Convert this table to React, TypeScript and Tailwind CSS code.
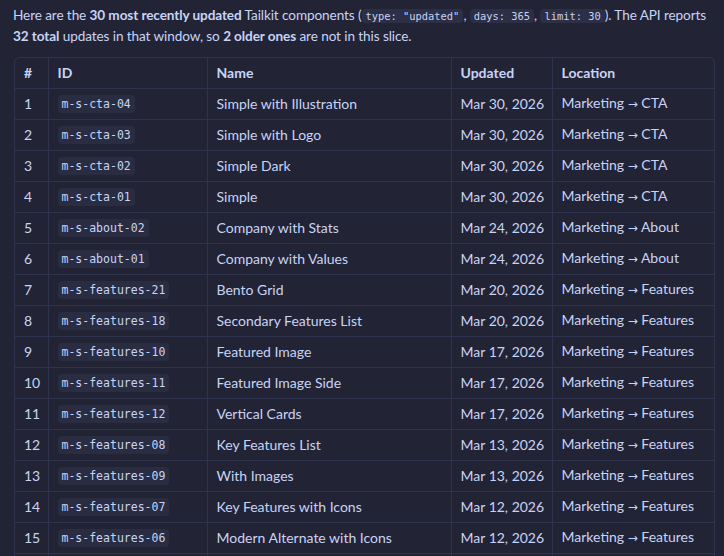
const rows = [
  { id: "m-s-cta-04", name: "Simple with Illustration", date: "Mar 30, 2026", loc: "CTA" },
  { id: "m-s-cta-03", name: "Simple with Logo", date: "Mar 30, 2026", loc: "CTA" },
  { id: "m-s-cta-02", name: "Simple Dark", date: "Mar 30, 2026", loc: "CTA" },
  { id: "m-s-cta-01", name: "Simple", date: "Mar 30, 2026", loc: "CTA" },
  { id: "m-s-about-02", name: "Company with Stats", date: "Mar 24, 2026", loc: "About" },
  { id: "m-s-about-01", name: "Company with Values", date: "Mar 24, 2026", loc: "About" },
  { id: "m-s-features-21", name: "Bento Grid", date: "Mar 20, 2026", loc: "Features" },
  { id: "m-s-features-18", name: "Secondary Features List", date: "Mar 20, 2026", loc: "Features" },
  { id: "m-s-features-10", name: "Featured Image", date: "Mar 17, 2026", loc: "Features" },
  { id: "m-s-features-11", name: "Featured Image Side", date: "Mar 17, 2026", loc: "Features" },
  { id: "m-s-features-12", name: "Vertical Cards", date: "Mar 17, 2026", loc: "Features" },
  { id: "m-s-features-08", name: "Key Features List", date: "Mar 13, 2026", loc: "Features" },
  { id: "m-s-features-09", name: "With Images", date: "Mar 13, 2026", loc: "Features" },
  { id: "m-s-features-07", name: "Key Features with Icons", date: "Mar 12, 2026", loc: "Features" },
  { id: "m-s-features-06", name: "Modern Alternate with Icons", date: "Mar 12, 2026", loc: "Features" },
  { id: "m-s-features-05", name: "Modern Alternate", date: "Mar 12, 2026", loc: "Features" },
];

function Code({ children }: { children: React.ReactNode }) {
  return (
    <code className="rounded-[4px] bg-[#2c2f45] px-[4px] py-px font-['DejaVu_Sans_Mono',monospace] text-[10.4px] tracking-normal text-[#c8d3f5]">
      {children}
    </code>
  );
}

// arrow glyph from DejaVu, thinner and wider than the Lato one
const Arrow = () => <span className="font-['DejaVu_Sans',sans-serif] text-[12px]">→</span>;

export default function App() {
  return (
    <div className="min-h-screen bg-[#222436] px-[13px] pt-[5px] font-['Lato',sans-serif] text-[14px] leading-[20px] text-[#c8d3f5]">
      {/* intro */}
      <p className="mb-[11px] text-[13.6px] tracking-[-0.1px]">
        Here are the <b className="font-bold">30 most recently updated</b> Tailkit components (
        <Code>type: "updated"</Code>, <Code>days: 365</Code>, <Code>limit: 30</Code>). The API reports{" "}
        <b className="font-bold">32 total</b> updates in that window, so{" "}
        <b className="font-bold">2 older ones</b> are not in this slice.
      </p>

      {/* table */}
      <div className="ml-px w-[701px] overflow-hidden rounded-t-[6px] border border-b-0 border-[#2f334d]">
        <table className="w-full table-fixed border-collapse">
          <colgroup>
            <col className="w-[33px]" />
            <col className="w-[159px]" />
            <col className="w-[244px]" />
            <col className="w-[101px]" />
            <col />
          </colgroup>
          <thead>
            <tr className="h-[30px] border-b border-[#2f334d] text-left">
              <th className="px-[9px] font-bold">#</th>
              <th className="border-l border-[#2f334d] px-[9px] font-bold">ID</th>
              <th className="border-l border-[#2f334d] px-[9px] font-bold">Name</th>
              <th className="border-l border-[#2f334d] px-[9px] font-bold">Updated</th>
              <th className="border-l border-[#2f334d] px-[9px] font-bold">Location</th>
            </tr>
          </thead>
          <tbody>
            {rows.map((r, i) => (
              <tr key={r.id} className="h-[31px] border-b border-[#2f334d]">
                <td className="px-[9px]">{i + 1}</td>
                <td className="border-l border-[#2f334d] px-[9px]">
                  <code className="rounded-[4px] bg-[#2a2d42] px-[4px] py-[2px] font-['DejaVu_Sans_Mono',monospace] text-[11.5px]">
                    {r.id}
                  </code>
                </td>
                <td className="whitespace-nowrap border-l border-[#2f334d] px-[9px]">{r.name}</td>
                <td className="whitespace-nowrap border-l border-[#2f334d] px-[9px]">{r.date}</td>
                <td className="whitespace-nowrap border-l border-[#2f334d] px-[9px]">
                  Marketing <Arrow /> {r.loc}
                </td>
              </tr>
            ))}
          </tbody>
        </table>
      </div>
    </div>
  );
}
